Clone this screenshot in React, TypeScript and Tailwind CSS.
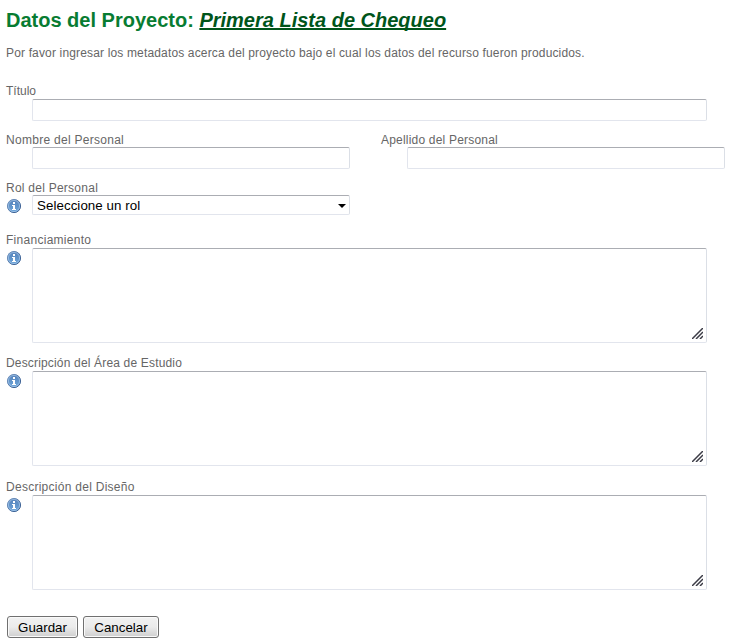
import React from 'react';

function Info({ className }: { className: string }) {
  return (
    <svg className={`${className} ml-px block h-4 w-4 shrink-0`} viewBox="0 0 16 16">
      <defs>
        <linearGradient id="blue" x1="0" y1="0" x2="0" y2="1">
          <stop offset="0" stopColor="#5480b8" />
          <stop offset="1" stopColor="#6fa8dc" />
        </linearGradient>
        <linearGradient id="rim" x1="0" y1="0" x2="1" y2="1">
          <stop offset="0" stopColor="#7f9fc8" />
          <stop offset="1" stopColor="#2f5488" />
        </linearGradient>
      </defs>
      <circle cx="8" cy="8" r="6.6" fill="url(#blue)" stroke="url(#rim)" />
      <circle cx="8" cy="8" r="5.6" fill="none" stroke="#a9c8ea" strokeWidth=".7" />
      <path d="M7 4h2v2H7zM6 7h3v4h1v1H6v-1h1V8H6z" fill="#fff" />
    </svg>
  );
}

const field = 'block rounded-[2px] border border-[#e2e5ed] border-t-[#abadb3] border-r-[#dbdfe6] bg-white outline-none';

function Area({ label, className, labelClass }: { label: string; className: string; labelClass: string }) {
  return (
    <section className={className}>
      <label className={`ml-1.5 block h-4 leading-4 ${labelClass}`}>{label}</label>
      <div className="flex">
        <div className="w-8 pl-[5px]"><Info className="mt-[2px]" /></div>
        <div className="relative">
          <textarea className={`${field} h-[95px] w-[675px] resize-none`} />
          <svg className="absolute right-[4px] bottom-[4px] h-[11px] w-[11px]" viewBox="0 0 11 11" fill="none" stroke="#3c3c46" strokeWidth="1.5">
            <path d="M0 11L11 0M4 11L11 4M8 11L11 8" />
          </svg>
        </div>
      </div>
    </section>
  );
}

const button = 'h-[22px] rounded-[3px] border border-[#707070] bg-linear-to-b from-[#f2f2f2] via-[#ebebeb] via-50% to-[#cfcfcf] pt-px text-[13.333px] leading-5 text-black shadow-[inset_0_0_0_1px_#fafafa]';

export default function App() {
  return (
    <main className="h-[641px] w-[732px] overflow-hidden bg-white font-['Liberation_Sans',Arial,sans-serif] text-[12px] text-[#666]">
      <h1 className="ml-1.5 h-10 pt-2 text-[20px] leading-6 font-bold text-[#087c32]">
        Datos del Proyecto: <span className="text-[#00551b] italic underline decoration-2 underline-offset-1 [text-decoration-skip-ink:none]">Primera Lista de Chequeo</span>
      </h1>
      <p className="ml-1.5 h-[43px] pt-[5px] leading-4 tracking-[0.155px]">Por favor ingresar los metadatos acerca del proyecto bajo el cual los datos del recurso fueron producidos.</p>
      <label className="ml-1.5 block h-4 leading-4">Título</label>
      <input className={`${field} ml-8 h-[22px] w-[675px]`} />
      <div className="mt-[11px] flex gap-[57px]">
        <div className="w-[318px]">
          <label className="ml-1.5 block h-[15px] leading-4 tracking-[0.28px]">Nombre del Personal</label>
          <input className={`${field} ml-8 h-[22px] w-[318px]`} />
        </div>
        <div>
          <label className="ml-1.5 block h-[15px] leading-4 tracking-[0.2px]">Apellido del Personal</label>
          <input className={`${field} ml-8 h-[22px] w-[318px]`} />
        </div>
      </div>
      <label className="mt-[11px] ml-1.5 block h-[15px] leading-4 tracking-[0.25px]">Rol del Personal</label>
      <div className="flex h-5">
        <div className="w-8 pl-[5px]"><Info className="mt-[3px]" /></div>
        <button className={`${field} flex h-5 w-[318px] items-center justify-between pr-[3px] pl-1 text-[13.333px] text-black`}>
          <span className="relative top-px tracking-[0.06px]">Seleccione un rol</span>
          <svg className="mt-px h-4 w-7 shrink-0" viewBox="0 0 28 16"><path d="M20 6h8l-4 4z" /></svg>
        </button>
      </div>
      <Area label="Financiamiento" className="mt-[17px]" labelClass="tracking-[0.28px]" />
      <Area label="Descripción del Área de Estudio" className="mt-3" labelClass="tracking-[0.17px]" />
      <Area label="Descripción del Diseño" className="mt-[13px]" labelClass="tracking-[0.27px]" />
      <div className="mt-[26px] ml-[7px] flex gap-[5px]">
        <button className={`${button} w-[71px]`}>Guardar</button>
        <button className={`${button} w-[76px]`}>Cancelar</button>
      </div>
    </main>
  );
}
